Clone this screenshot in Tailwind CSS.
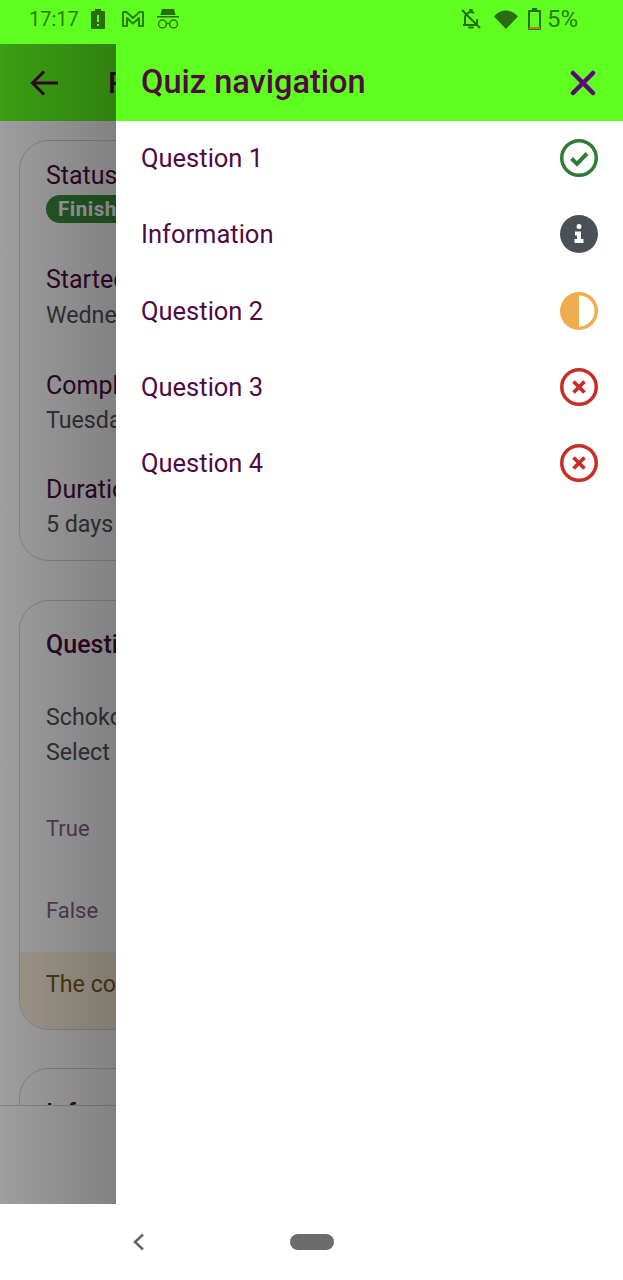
<!DOCTYPE html>
<html lang="en">
<head>
    <meta charset="UTF-8">
    <meta name="viewport" content="width=device-width, initial-scale=1.0">
    <title>Quiz navigation</title>
    <script src="https://cdn.jsdelivr.net/npm/@tailwindcss/browser@4"></script>
</head>
<body>
    <div class="relative w-[623px] h-[1280px] overflow-hidden bg-white flex flex-col font-['Roboto',sans-serif]">
        <!-- Status bar -->
        <div class="relative z-20 h-11 shrink-0 bg-[#5fff1f] flex items-center pl-[29px] pr-[45px] pb-[6px] text-[#2b7d12]">
            <span class="text-[20px] leading-none w-[60px]">17:17</span>
            <svg class="w-[18px] h-[22px]" viewBox="0 0 18 22"><path fill="#2b6b12" fill-rule="evenodd" d="M6 1h6v2h3a1 1 0 0 1 1 1v16a1 1 0 0 1-1 1H3a1 1 0 0 1-1-1V4a1 1 0 0 1 1-1h3zM8 7v7h2V7zM8 16v2h2v-2z"/></svg>
            <svg class="w-[24px] h-[18px] ml-[14px]" viewBox="0 0 24 18" fill="none" stroke="#2b7d12" stroke-width="2" stroke-linejoin="round"><path d="M2 2h3.500L12 8l6.500-6H22v14h-4V8l-6 5.500L6 8v8H2z"/></svg>
            <svg class="w-[24px] h-[22px] ml-[11px]" viewBox="0 0 24 22"><path fill="#2b6b12" d="M6 1h12l1.500 6H4.500zM1 8h22v1.500H1z"/><g fill="none" stroke="#2b7d12" stroke-width="1.500"><circle cx="6.500" cy="16" r="4"/><circle cx="17.500" cy="16" r="4"/><path d="M10.500 15.500h3"/></g></svg>
            <div class="flex-1"></div>
            <svg class="w-[22px] h-[22px]" viewBox="0 0 22 22" fill="none" stroke="#2b6b12" stroke-width="2"><path d="M5 16V10a6 6 0 0 1 9-5.200M17 11v5M3 17h14M2 2l18 18"/><path d="M9 19.500h4M10 2h2" stroke-linecap="round"/></svg>
            <svg class="w-[24px] h-[19px] ml-[12px]" viewBox="0 0 24 19"><path fill="#2b6b12" d="M12 19 0 6.500C3 3 7 .5 12 .5S21 3 24 6.500z"/></svg>
            <svg class="w-[13px] h-[22px] ml-[10px]" viewBox="0 0 13 22"><path fill="#2b6b12" fill-rule="evenodd" d="M4 0h5v2h3a1 1 0 0 1 1 1v18a1 1 0 0 1-1 1H1a1 1 0 0 1-1-1V3a1 1 0 0 1 1-1h3zM2 4v15h9V4z"/><path fill="#c77a14" d="M1 19h11v2H1z"/></svg>
            <span class="text-[24px] leading-none ml-[6px] whitespace-nowrap">5%</span>
        </div>

        <!-- Page behind the drawer -->
        <header class="h-[77px] shrink-0 bg-[#5fff1f] flex items-center pl-[30px] text-[#4f0a44]">
            <svg class="w-[29px] h-[26px]" viewBox="0 0 29 26" fill="none" stroke="currentColor" stroke-width="3"><path d="M28 13H3M14 1.500 2.500 13 14 24.500"/></svg>
            <h1 class="ml-[49px] text-[30px] font-medium">Review</h1>
        </header>
        <main class="h-[984px] shrink-0 overflow-hidden bg-white pl-[19px] pr-[20px] pt-[19px]">
            <section class="h-[421px] rounded-[30px] border border-gray-300 pl-[26px] pt-[19px] text-[25px] leading-[32px] whitespace-nowrap">
                <p class="text-[#4f0a44]">Status</p>
                <span class="inline-block mt-[3px] h-[28px] px-[12px] rounded-full bg-[#388e3c] text-white text-[20.500px] font-bold leading-[28px] tracking-wide align-top">Finished</span>
                <p class="mt-[40px] text-[#4f0a44]">Started on</p>
                <p class="mt-[3px] text-[#52525b] text-[23.200px]">Wednesday, 1 March</p>
                <p class="mt-[39px] text-[#4f0a44]">Completed on</p>
                <p class="mt-[2px] text-[#52525b] text-[23.200px]">Tuesday, 7 March</p>
                <p class="mt-[38px] text-[#4f0a44]">Duration</p>
                <p class="mt-[2px] text-[#52525b] text-[23.200px]">5 days 3 hours</p>
            </section>
            <section class="mt-[39px] h-[430px] rounded-[30px] border border-gray-300 overflow-hidden flex flex-col text-[23.200px] leading-[35px] whitespace-nowrap">
                <h2 class="ml-[26px] mt-[26px] text-[25px] font-medium text-[#4f0a44]">Question 1</h2>
                <p class="ml-[26px] mt-[38px] text-[#52525b]">Schokolade ist gesund.</p>
                <p class="ml-[26px] text-[#52525b]">Select one:</p>
                <p class="ml-[26px] mt-[41px] text-[#8a5f8d] text-[22px]">True</p>
                <p class="ml-[26px] mt-[47px] text-[#8a5f8d] text-[22px]">False</p>
                <p class="mt-auto h-[77px] pl-[26px] pt-[15px] bg-[#fdf0dc] text-[#7a5a24]">The correct answer is</p>
            </section>
            <section class="mt-[38px] h-[200px] rounded-[30px] border border-gray-300 pl-[26px] pt-[26px] text-[25px] font-medium text-[#4f0a44]">
                <h2>Information</h2>
            </section>
        </main>
        <!-- Bottom bar of the page -->
        <div class="h-[99px] shrink-0 bg-white border-t border-gray-300"></div>
        <nav class="flex-1 bg-white flex items-center">
            <svg class="ml-[132px] w-[13px] h-[18px]" viewBox="0 0 13 18" fill="none" stroke="#666" stroke-width="2.500"><path d="M11 1.500 3 9l8 7.500"/></svg>
            <span class="ml-[145px] w-[44px] h-4 rounded-full bg-[#6b6b6b]"></span>
        </nav>

        <!-- Scrim -->
        <div class="absolute left-0 top-[44px] w-[116px] h-[1160px] bg-black/38"></div>
        <div class="absolute left-0 top-[44px] w-[116px] h-[1160px] bg-gradient-to-r from-black/0 to-black/18"></div>

        <!-- Drawer -->
        <aside class="absolute left-[116px] right-0 top-[44px] h-[1160px] bg-white">
            <div class="h-[77px] bg-[#5fff1f] flex items-center justify-between pl-[25px] pr-[27px] text-[#4f0a44]">
                <h2 class="text-[32.500px] font-medium whitespace-nowrap">Quiz navigation</h2>
                <svg class="w-[26px] h-[26px]" viewBox="0 0 26 26" fill="none" stroke="#5a0a78" stroke-width="4.500" stroke-linecap="round"><path d="M3 3l20 20M23 3 3 23"/></svg>
            </div>
            <ul class="text-[25.500px] text-[#4f0a44] -mt-px">
                <li class="h-[76.250px] flex items-center justify-between pl-[25px] pr-[25px]">
                    <span>Question 1</span>
                    <svg class="w-[38px] h-[38px]" viewBox="0 0 38 38" fill="none" stroke="#2e7d32"><circle cx="19" cy="19" r="17.250" stroke-width="3.500"/><path d="M11.500 19.500 17 25l10-10.500" stroke-width="4"/></svg>
                </li>
                <li class="h-[76.250px] flex items-center justify-between pl-[25px] pr-[25px]">
                    <span>Information</span>
                    <svg class="w-[38px] h-[38px]" viewBox="0 0 38 38"><circle cx="19" cy="19" r="19" fill="#495057"/><circle cx="19" cy="11.500" r="2.500" fill="#fff"/><path fill="#fff" d="M15 16.500h6V24h2.500v4H14.500v-4H17v-3.500h-2z"/></svg>
                </li>
                <li class="h-[76.250px] flex items-center justify-between pl-[25px] pr-[25px]">
                    <span>Question 2</span>
                    <svg class="w-[38px] h-[38px]" viewBox="0 0 38 38"><circle cx="19" cy="19" r="19" fill="#f0ad4e"/><path fill="#fff" d="M19 3.500a15.500 15.500 0 0 1 0 31z"/></svg>
                </li>
                <li class="h-[76.250px] flex items-center justify-between pl-[25px] pr-[25px]">
                    <span>Question 3</span>
                    <svg class="w-[38px] h-[38px]" viewBox="0 0 38 38" fill="none" stroke="#c62f26"><circle cx="19" cy="19" r="17.250" stroke-width="3.500"/><path d="m13.500 13.500 11 11M24.500 13.500l-11 11" stroke-width="3.800"/></svg>
                </li>
                <li class="h-[76.250px] flex items-center justify-between pl-[25px] pr-[25px]">
                    <span>Question 4</span>
                    <svg class="w-[38px] h-[38px]" viewBox="0 0 38 38" fill="none" stroke="#c62f26"><circle cx="19" cy="19" r="17.250" stroke-width="3.500"/><path d="m13.500 13.500 11 11M24.500 13.500l-11 11" stroke-width="3.800"/></svg>
                </li>
            </ul>
        </aside>
    </div>
</body>
</html>
